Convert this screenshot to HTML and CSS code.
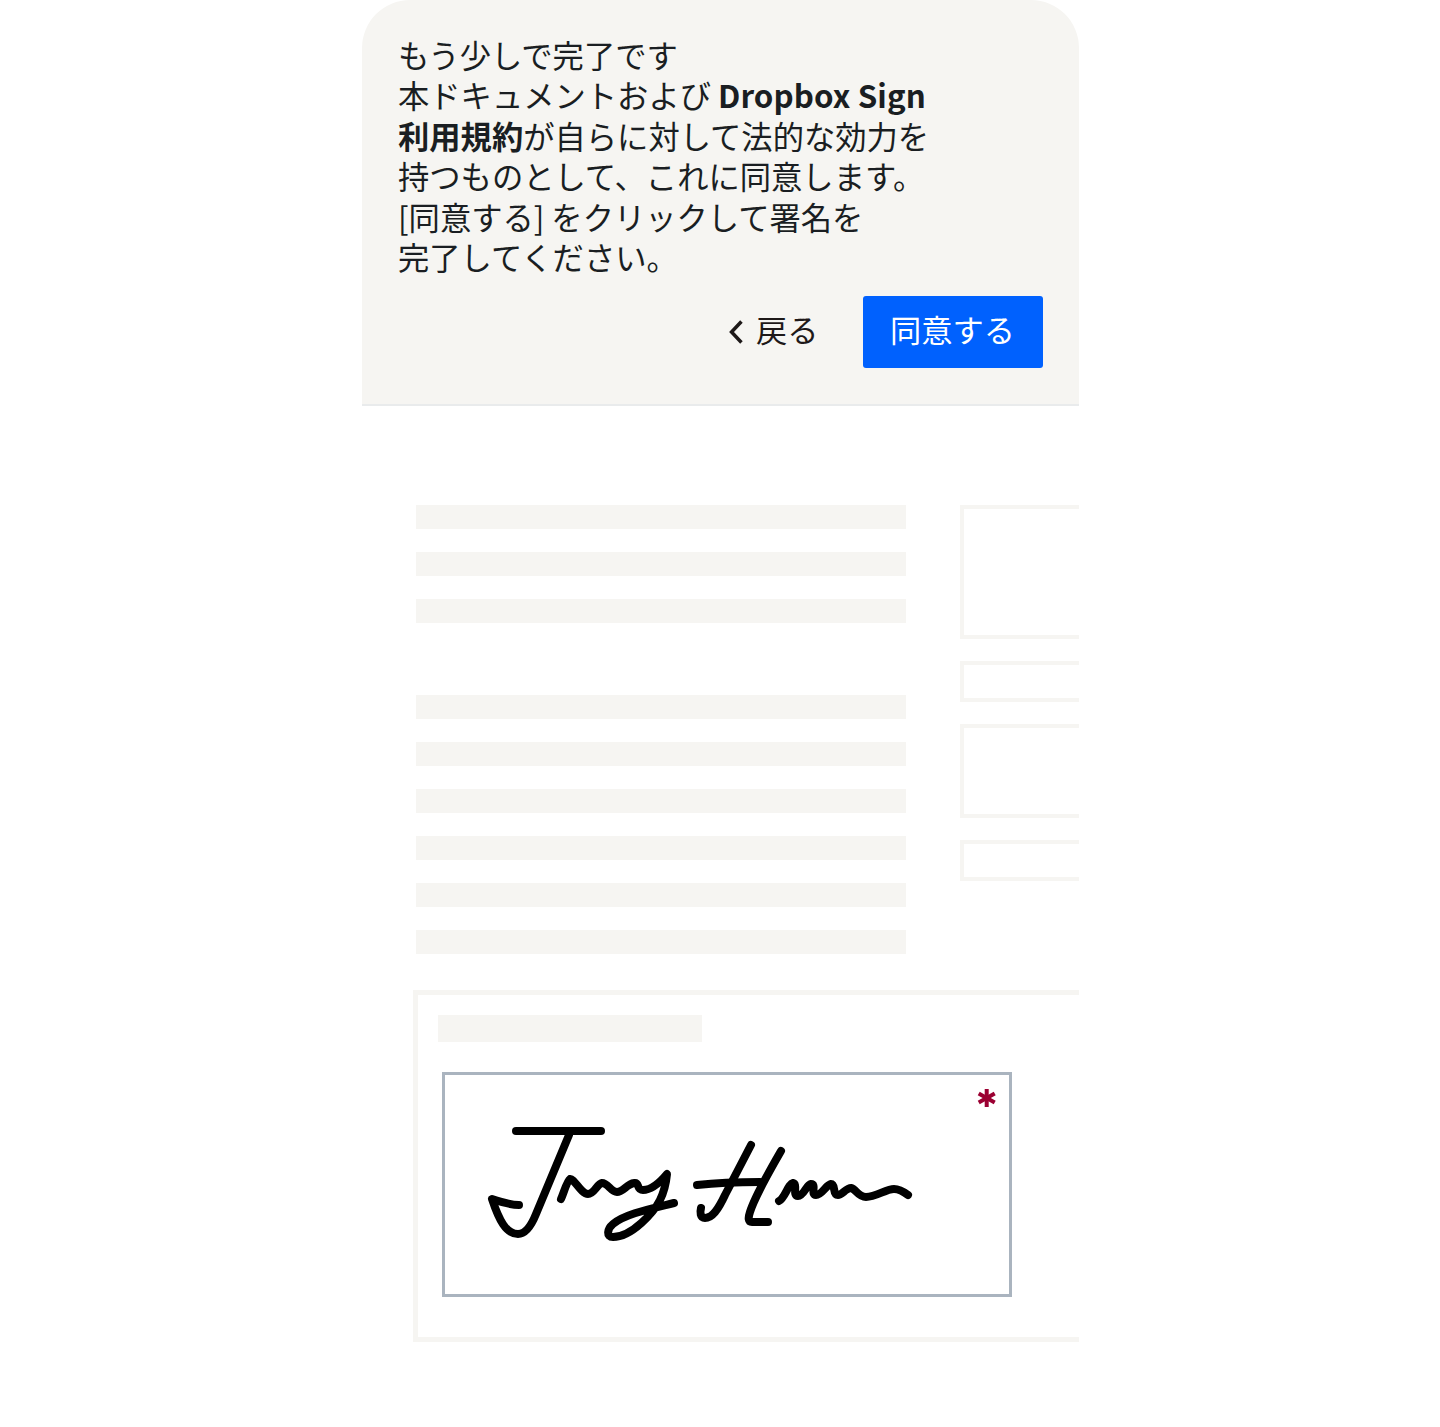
FILE: index.html
```html
<!DOCTYPE html>
<html lang="ja">
<head>
<meta charset="utf-8">
<title>Dropbox Sign</title>
<link rel="stylesheet" href="styles.css">
</head>
<body>
<main class="sheet">
  <section class="panel">
    <p class="message">もう少しで完了です<br>本ドキュメントおよび <strong class="latin">Dropbox Sign</strong><br><strong>利用規約</strong>が自らに対して法的な効力を<br>持つものとして、これに同意します。<br>[同意する] をクリックして署名を<br>完了してください。</p>
    <div class="actions">
      <button class="back" type="button">
        <svg class="chevron" viewBox="0 0 14 24" aria-hidden="true"><path d="M11.5 3 L3 12 L11.5 21"/></svg>
        <span>戻る</span>
      </button>
      <button class="agree" type="button">同意する</button>
    </div>
  </section>
  <section class="document">
    <div class="columns">
      <div class="lines">
        <div class="group">
          <div class="line"></div><div class="line"></div><div class="line"></div>
        </div>
        <div class="group">
          <div class="line"></div><div class="line"></div><div class="line"></div>
          <div class="line"></div><div class="line"></div><div class="line"></div>
        </div>
      </div>
      <div class="fields">
        <div class="field field-a"></div>
        <div class="field field-b"></div>
        <div class="field field-c"></div>
        <div class="field field-b"></div>
      </div>
    </div>
    <div class="card">
      <div class="card-label"></div>
      <div class="signature">
        <svg class="signature-art" viewBox="445 1075 564 219" aria-hidden="true">
          <g class="ink">
            <path d="M516 1131 H601"/>
            <path d="M569 1135 L536 1214 C530 1229 524 1234 518 1234 C506 1234 499 1220 492 1199 C501 1202 510 1205 519 1205"/>
            <path d="M561 1199 C564 1192 567 1181 570 1179 C574 1178 581 1194 588 1194 C594 1194 597 1184 602 1183 C608 1183 611 1192 617 1192 C623 1192 627 1184 634 1183 C640 1182 636 1190 643 1190 C652 1190 662 1180 667 1174 C666 1184 664 1192 660 1200 C654 1212 632 1237 613 1237 C606 1237 607 1229 613 1224 C625 1214 650 1209 674 1203"/>
            <path d="M697 1185 C715 1183 740 1182 760 1182"/>
            <path d="M751 1145 L725 1195 C718 1210 712 1218 705 1218 C700 1218 700 1212 701 1208"/>
            <path d="M781 1151 C770 1170 755 1196 750 1212 C748 1218 748 1222 752 1222 H768"/>
            <path d="M779 1201 C785 1198 788 1184 793 1183 C798 1184 792 1196 798 1196 C804 1196 806 1185 811 1184 C817 1184 810 1195 816 1195 C822 1195 826 1185 831 1184 C836 1184 832 1195 838 1195 C842 1195 846 1188 851 1188 C856 1189 858 1197 866 1197 C876 1197 886 1189 894 1189 C900 1189 904 1192 908 1195"/>
          </g>
          <g class="star">
            <path d="M986.700 1089 V1107"/>
            <path d="M978.700 1093.500 L994.700 1102.500"/>
            <path d="M994.700 1093.500 L978.700 1102.500"/>
          </g>
        </svg>
      </div>
    </div>
  </section>
</main>
</body>
</html>
```
FILE: styles.css
```css
* {
  box-sizing: border-box;
}

html,
body {
  margin: 0;
  padding: 0;
  background: #fff;
}

body {
  min-height: 1427px;
  font-family: "Noto Sans CJK JP", "Noto Sans", sans-serif;
  color: #1e1919;
}

.sheet {
  width: 717px;
  margin: 0 auto;
  overflow: hidden;
}

.panel {
  height: 406px;
  padding: 34.500px 36px 0 36.500px;
  background: #f6f5f2;
  border-bottom: 2px solid #e9ebec;
  border-radius: 48px 48px 0 0;
}

.message {
  margin: 0;
  font-size: 31.300px;
  line-height: 40.600px;
  color: #1a1e22;
  white-space: nowrap;
}

.message strong {
  font-weight: 700;
}

.latin {
  letter-spacing: 0.100px;
}

.actions {
  display: flex;
  justify-content: flex-end;
  align-items: center;
  gap: 44px;
  margin-top: 17.900px;
}

.back,
.agree {
  font: inherit;
  border: 0;
  padding: 0 0 6px;
  cursor: pointer;
}

.back {
  display: flex;
  align-items: center;
  gap: 11.600px;
  background: none;
  color: #1e1919;
  font-size: 31.200px;
}

.chevron {
  width: 16.400px;
  height: 28px;
  margin-top: 6px;
  fill: none;
  stroke: #1e1919;
  stroke-width: 3;
}

.agree {
  width: 180px;
  height: 72px;
  background: #0061fe;
  color: #fff;
  font-size: 31.200px;
  border-radius: 3px;
}

.document {
  padding: 98.700px 0 0 51.200px;
}

.columns {
  display: flex;
  gap: 54px;
}

.lines {
  display: flex;
  flex-direction: column;
  gap: 71.400px;
  width: 490px;
  flex: none;
  margin-left: 3.300px;
}

.group {
  display: flex;
  flex-direction: column;
  gap: 22.400px;
}

.line {
  height: 24.600px;
  background: #f6f5f2;
}

.fields {
  display: flex;
  flex-direction: column;
  gap: 22.400px;
  flex: none;
  width: 300px;
}

.field {
  border: 4px solid #f6f5f2;
}

.field-a {
  height: 134.400px;
}

.field-b {
  height: 40.400px;
}

.field-c {
  height: 93.800px;
}

.card {
  width: 800px;
  height: 352.700px;
  margin-top: 35.500px;
  padding: 20px 0 0 20px;
  border: 5.500px solid #f6f5f2;
}

.card-label {
  width: 264px;
  height: 27px;
  background: #f6f5f2;
}

.signature {
  width: 570px;
  height: 225px;
  margin: 30.500px 0 0 4.800px;
  border: 3px solid #aab4bf;
  background: #fff;
}

.signature-art {
  display: block;
  width: 100%;
  height: 100%;
}

.ink path {
  fill: none;
  stroke: #000;
  stroke-width: 8;
  stroke-linecap: round;
  stroke-linejoin: round;
}

.star path {
  fill: none;
  stroke: #9b0032;
  stroke-width: 4;
}
```
